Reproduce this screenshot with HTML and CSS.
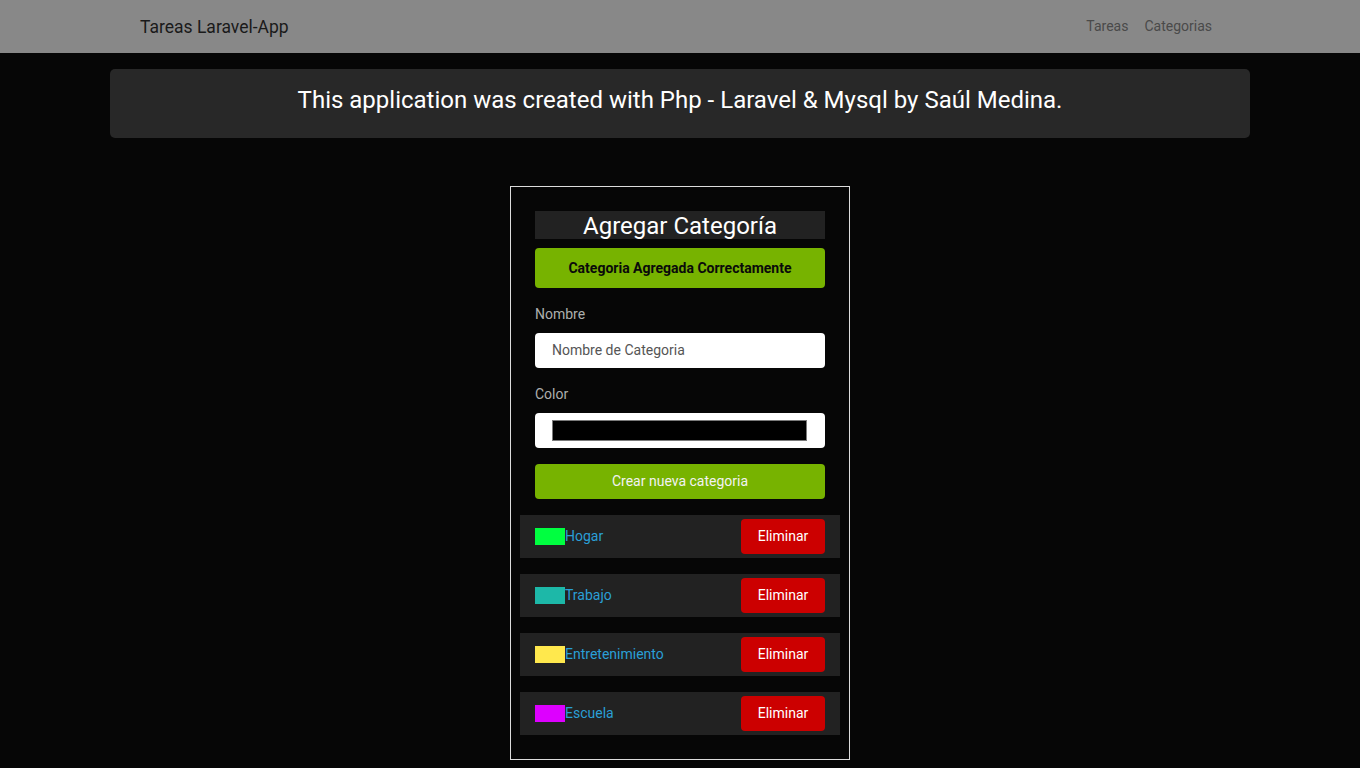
FILE: index.html
```html
<!DOCTYPE html>
<html lang="es">
<head>
<meta charset="utf-8">
<title>Tareas Laravel-App</title>
<link rel="stylesheet" href="styles.css">
</head>
<body>
<nav class="navbar">
  <div class="nav-inner">
    <a class="brand" href="#">Tareas Laravel-App</a>
    <ul class="nav-links">
      <li><a href="#">Tareas</a></li>
      <li><a href="#">Categorias</a></li>
    </ul>
  </div>
</nav>
<div class="container">
  <div class="jumbo">This application was created with Php - Laravel &amp; Mysql by Saúl Medina.</div>
</div>
<div class="card">
  <h2 class="card-title">Agregar Categoría</h2>
  <div class="alert">Categoria Agregada Correctamente</div>
  <div class="form-group">
    <label class="label">Nombre</label>
    <div class="input"><span class="placeholder">Nombre de Categoria</span></div>
  </div>
  <div class="form-group">
    <label class="label">Color</label>
    <div class="input color-input"><span class="swatch-box"></span></div>
  </div>
  <button class="btn-success">Crear nueva categoria</button>
  <div class="list">
    <div class="row">
      <a class="cat" href="#"><span class="sw" style="background:#00ff40"></span>Hogar</a>
      <button class="btn-danger">Eliminar</button>
    </div>
    <div class="row">
      <a class="cat" href="#"><span class="sw" style="background:#1db8a8"></span>Trabajo</a>
      <button class="btn-danger">Eliminar</button>
    </div>
    <div class="row">
      <a class="cat" href="#"><span class="sw" style="background:#ffe84d"></span>Entretenimiento</a>
      <button class="btn-danger">Eliminar</button>
    </div>
    <div class="row">
      <a class="cat" href="#"><span class="sw" style="background:#dd00ff"></span>Escuela</a>
      <button class="btn-danger">Eliminar</button>
    </div>
  </div>
</div>
</body>
</html>
```

FILE: styles.css
```css
* { box-sizing: border-box; }
html, body { margin: 0; padding: 0; }
body {
  background: #060606;
  color: #adafae;
  font-family: Roboto, "Liberation Sans", sans-serif;
  font-size: 14px;
  line-height: 1.5;
  padding-bottom: 40px;
}
a { text-decoration: none; }
.navbar {
  background: #888888;
  height: 53px;
}
.nav-inner {
  width: 1080px;
  margin: 0 auto;
  height: 53px;
  display: flex;
  align-items: center;
  justify-content: space-between;
}
.brand {
  color: #1a1a1a;
  font-size: 17.5px;
  line-height: 26px;
  padding-top: 1px;
}
.nav-links {
  list-style: none;
  margin: 0;
  padding: 0;
  display: flex;
}
.nav-links a {
  display: block;
  color: #4a4a4a;
  padding: 0 8px;
  line-height: 21px;
  font-size: 14px;
}
.container {
  width: 1140px;
  margin: 16px auto 0;
}
.jumbo {
  background: #282828;
  border-radius: 5px;
  height: 69px;
  display: flex;
  align-items: center;
  justify-content: center;
  color: #ffffff;
  font-size: 24px;
  padding-bottom: 7px;
}
.card {
  width: 340px;
  margin: 48px auto 0;
  border: 1px solid #dcdcdc;
  padding: 24px 24px 24px;
  background: #060606;
}
.card-title {
  margin: 0;
  background: #222222;
  color: #ffffff;
  font-weight: 400;
  font-size: 24px;
  line-height: 28px;
  height: 28px;
  padding-top: 1px;
  text-align: center;
  overflow: hidden;
}
.alert {
  margin-top: 9px;
  margin-bottom: 16px;
  background: #77b300;
  border-radius: 4px;
  height: 40px;
  display: flex;
  align-items: center;
  justify-content: center;
  color: #0a0a0a;
  font-weight: 700;
  font-size: 14px;
}
.form-group { margin-bottom: 16px; }
.label {
  display: block;
  line-height: 21px;
  margin-bottom: 8px;
  color: #adafae;
}
.input {
  background: #ffffff;
  border-radius: 4px;
  height: 35px;
  padding: 0 17px;
  display: flex;
  align-items: center;
}
.placeholder { color: #555555; font-size: 14px; }
.color-input { padding: 0 18px 0 17px; }
.swatch-box {
  display: block;
  width: 100%;
  height: 21px;
  background: #000000;
  border: 1px solid #7a7a7a;
}
.btn-success {
  display: block;
  width: 100%;
  height: 35px;
  border: 0;
  border-radius: 4px;
  background: #77b300;
  color: #f2f2f2;
  font-family: inherit;
  font-size: 14px;
  padding: 0 0 1px;
}
.list {
  margin: 16px -15px 0;
  display: flex;
  flex-direction: column;
  gap: 16px;
}
.row {
  background: #222222;
  height: 43px;
  padding: 4px 15px;
  display: flex;
  align-items: center;
  justify-content: space-between;
}
.cat {
  display: flex;
  align-items: center;
  color: #2a9fd6;
  font-size: 14px;
}
.sw {
  display: inline-block;
  width: 30px;
  height: 17px;
}
.btn-danger {
  width: 84px;
  height: 35px;
  border: 0;
  border-radius: 4px;
  background: #cc0000;
  color: #ffffff;
  font-family: inherit;
  font-size: 14px;
  padding: 0 0 1px;
}
```
